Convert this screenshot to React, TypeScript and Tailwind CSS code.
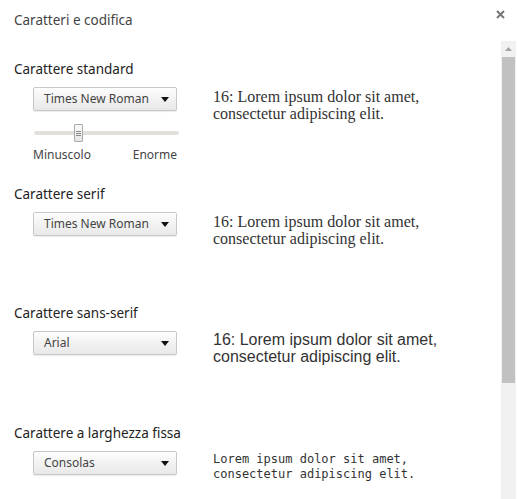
import React from 'react';

const UI = '"Noto Sans", "Open Sans", sans-serif';

function Select({ label }: { label: string }) {
  return (
    <div className="flex h-[24px] w-[144px] items-center justify-between rounded-[2px] border border-[#c8c8c8] bg-gradient-to-b from-[#fdfdfd] to-[#e8e8e8] pl-[10px] pr-[7px] shadow-[0_1px_1px_rgba(0,0,0,0.08)]">
      <span className="text-[12px] leading-none text-[#444]">{label}</span>
      <svg width="8" height="5" viewBox="0 0 8 5" aria-hidden="true">
        <path d="M0 0h8L4 5z" fill="#111" />
      </svg>
    </div>
  );
}

function Heading({ children }: { children: React.ReactNode }) {
  return <div className="text-[13.5px] leading-[18px] text-[#222]">{children}</div>;
}

function Preview({ font, size, lh, children }: { font: string; size: string; lh: string; children: React.ReactNode }) {
  return (
    <div className={`${size} ${lh} text-[#333]`} style={{ fontFamily: font }}>
      {children}
    </div>
  );
}

export default function App() {
  return (
    <div className="h-[499px] w-[517px] overflow-hidden bg-white" style={{ fontFamily: UI }}>
      {/* Header */}
      <div className="flex h-[41px] items-start justify-between">
        <div className="pl-[14px] pt-[11px] text-[13.5px] leading-[18px] text-[#444]">Caratteri e codifica</div>
        <button className="mr-[10px] mt-[8px] p-[2px]" aria-label="Chiudi">
          <svg width="9" height="9" viewBox="0 0 9 9" aria-hidden="true">
            <path d="M1 1l7 7M8 1L1 8" stroke="#777" strokeWidth="2" />
          </svg>
        </button>
      </div>

      <div className="flex h-[458px]">
        {/* Content */}
        <div className="flex-1 pl-[14px]">
          {/* Standard */}
          <div className="pt-[19px]">
            <Heading>Carattere standard</Heading>
            <div className="mt-[9px] flex">
              <div className="ml-[19px] w-[146px]">
                <Select label="Times New Roman" />
                <div className="relative mt-[13px] h-[18px]">
                  <div className="absolute left-[1px] top-[7px] h-[4px] w-[145px] rounded-[2px] bg-[#e3e0dc]" />
                  <div className="absolute left-[41px] top-0 flex h-[18px] w-[9px] flex-col items-center justify-center gap-[1px] rounded-[1px] border border-[#aaa] bg-gradient-to-b from-[#fafafa] to-[#e6e6e6]">
                    <div className="h-px w-[5px] bg-[#888]" />
                    <div className="h-px w-[5px] bg-[#888]" />
                    <div className="h-px w-[5px] bg-[#888]" />
                  </div>
                </div>
                <div className="mt-[5px] flex w-[144px] justify-between text-[12px] leading-[16px] text-[#444]">
                  <span>Minuscolo</span>
                  <span>Enorme</span>
                </div>
              </div>
              <div className="ml-[34px] pt-[1px]">
                <Preview font='"Liberation Serif", serif' size="text-[16px]" lh="leading-[17px]">
                  16: Lorem ipsum dolor sit amet,
                  <br />
                  consectetur adipiscing elit.
                </Preview>
              </div>
            </div>
          </div>

          {/* Serif */}
          <div className="pt-[22px]">
            <Heading>Carattere serif</Heading>
            <div className="mt-[9px] flex">
              <div className="ml-[19px] w-[146px]">
                <Select label="Times New Roman" />
              </div>
              <div className="ml-[34px] pt-[1px]">
                <Preview font='"Liberation Serif", serif' size="text-[16px]" lh="leading-[17px]">
                  16: Lorem ipsum dolor sit amet,
                  <br />
                  consectetur adipiscing elit.
                </Preview>
              </div>
            </div>
          </div>

          {/* Sans-serif */}
          <div className="pt-[57px]">
            <Heading>Carattere sans-serif</Heading>
            <div className="mt-[9px] flex">
              <div className="ml-[19px] w-[146px]">
                <Select label="Arial" />
              </div>
              <div className="ml-[34px] pt-[0px]">
                <Preview font='"Liberation Sans", Arial, sans-serif' size="text-[16px]" lh="leading-[17px]">
                  16: Lorem ipsum dolor sit amet,
                  <br />
                  consectetur adipiscing elit.
                </Preview>
              </div>
            </div>
          </div>

          {/* Monospace */}
          <div className="pt-[59px]">
            <Heading>Carattere a larghezza fissa</Heading>
            <div className="mt-[9px] flex">
              <div className="ml-[19px] w-[146px]">
                <Select label="Consolas" />
              </div>
              <div className="ml-[34px] pt-[1px]">
                <Preview font='"DejaVu Sans Mono", "Liberation Mono", monospace' size="text-[12px]" lh="leading-[15px]">
                  Lorem ipsum dolor sit amet,
                  <br />
                  consectetur adipiscing elit.
                </Preview>
              </div>
            </div>
          </div>
        </div>

        {/* Scrollbar */}
        <div className="mr-[1px] flex w-[15px] flex-col bg-[#f1f1f1]">
          <div className="flex h-[16px] items-center justify-center">
            <svg width="7" height="4" viewBox="0 0 7 4" aria-hidden="true">
              <path d="M0 4h7L3.5 0z" fill="#a3a3a3" />
            </svg>
          </div>
          <div className="mx-[1px] h-[326px] bg-[#c1c1c1]" />
        </div>
      </div>
    </div>
  );
}
